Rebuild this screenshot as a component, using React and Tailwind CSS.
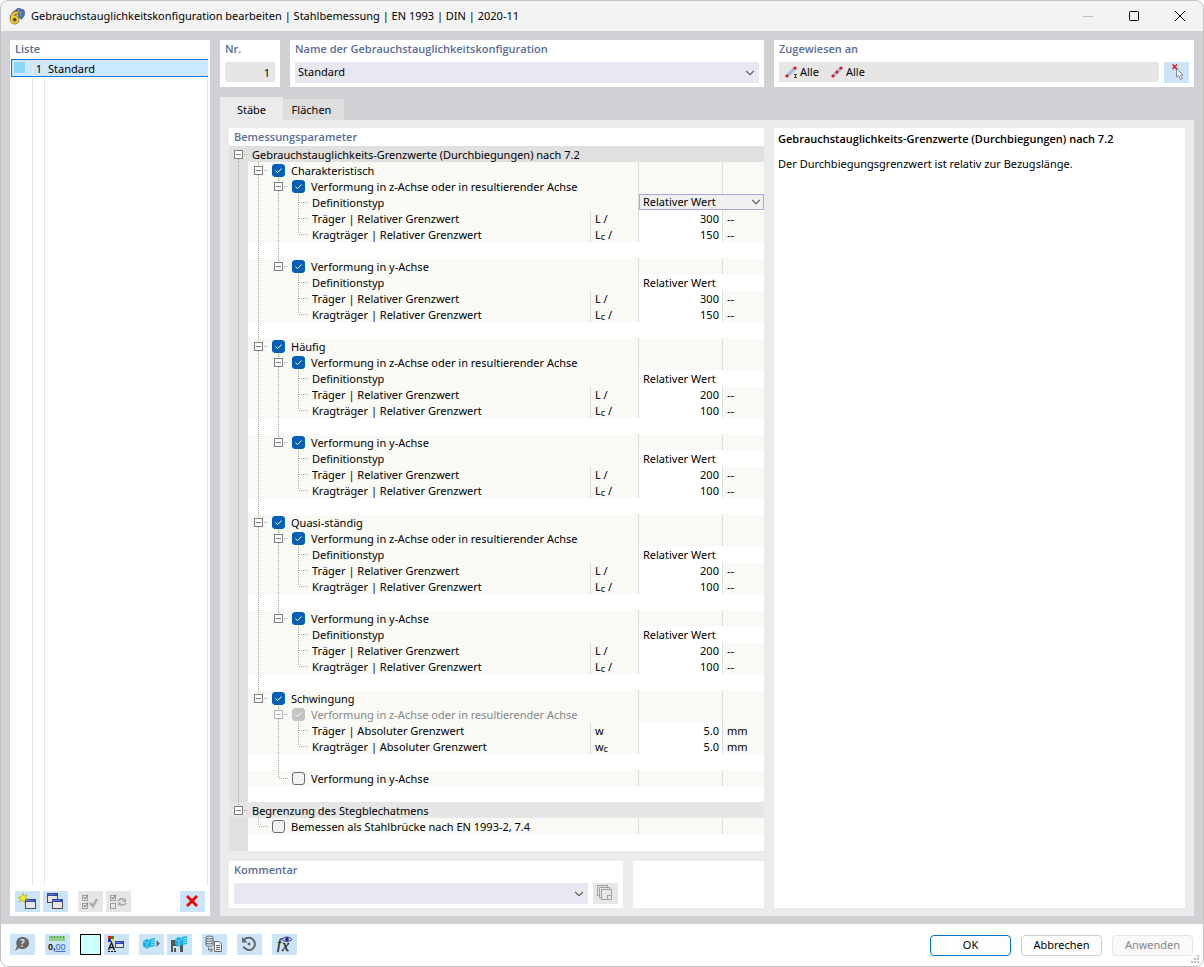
import { useState } from 'react';
import { ChevronDown } from 'lucide-react';

// Guide codes: '|' line, '+' tee, 'L' last branch, ' ' empty,
// 'm' box with line above and below, 'e' box with line above only, 'f' box with line below only
const Z_AXIS = 'Verformung in z-Achse oder in resultierender Achse';
const Y_AXIS = 'Verformung in y-Achse';

const limitRows = (outer, mid, beam, cantilever, dropdown) => [
    { guides: [outer, mid, '+'], label: 'Definitionstyp', choice: 'Relativer Wert', dropdown },
    { guides: [outer, mid, '+'], label: 'Träger | Relativer Grenzwert', symbol: 'L /', value: beam, unit: '--' },
    { guides: [outer, mid, 'L'], label: 'Kragträger | Relativer Grenzwert', symbol: 'L', sub: 'c', tail: ' /', value: cantilever, unit: '--' },
];

const group = (label, beam, cantilever, dropdown) => [
    { guides: ['m'], label, check: true },
    { guides: ['|', 'm'], label: Z_AXIS, check: true },
    ...limitRows('|', '|', beam, cantilever, dropdown),
    { blank: true, guides: ['|', '|'] },
    { guides: ['|', 'e'], label: Y_AXIS, check: true },
    ...limitRows('|', ' ', beam, cantilever),
    { blank: true, guides: ['|'] },
];

const rows = [
    { header: 'Gebrauchstauglichkeits-Grenzwerte (Durchbiegungen) nach 7.2', gutter: 'f', tone: 'bg-[#e0e0e0]' },
    ...group('Charakteristisch', '300', '150', true),
    ...group('Häufig', '200', '100'),
    ...group('Quasi-ständig', '200', '100'),
    { guides: ['e'], label: 'Schwingung', check: true },
    { guides: [' ', 'm'], label: Z_AXIS, check: true, disabled: true },
    { guides: [' ', '|', '+'], label: 'Träger | Absoluter Grenzwert', symbol: 'w', value: '5.0', unit: 'mm' },
    { guides: [' ', '|', 'L'], label: 'Kragträger | Absoluter Grenzwert', symbol: 'w', sub: 'c', value: '5.0', unit: 'mm' },
    { blank: true, guides: [' ', '|'] },
    { guides: [' ', 'L'], label: Y_AXIS, check: false },
    { blank: true, guides: [] },
    { header: 'Begrenzung des Stegblechatmens', gutter: 'e', tone: 'bg-[#e6e6e6]' },
    { guides: ['L'], label: 'Bemessen als Stahlbrücke nach EN 1993-2, 7.4', check: false, gutter: ' ' },
];

function Guide({ code, muted }) {
    const box = 'mef'.includes(code);
    const up = '|+Lme'.includes(code);
    const down = '|+mf'.includes(code);
    const right = '+Lmef'.includes(code);
    const edge = muted ? '#b4b4b4' : '#808080';

    return (
        <svg width="20" height="16" viewBox="0 0 20 16" className="block shrink-0" aria-hidden="true">
            <g stroke="#a6a6a6" strokeDasharray="1 1" fill="none">
                {up && <path d={box ? 'M10.5 0V4' : 'M10.5 0V8'} />}
                {down && <path d={box ? 'M10.5 13V16' : 'M10.5 8V16'} />}
                {right && <path d={box ? 'M16 8.5H21' : 'M11 8.5H21'} />}
            </g>
            {box && (
                <g fill="none" stroke={edge}>
                    <rect x="6.5" y="4.5" width="8" height="8" fill="#fff" />
                    <path d="M8 8.5H13" />
                </g>
            )}
        </svg>
    );
}

function Checkbox({ id, initial, disabled }) {
    const [checked, setChecked] = useState(initial);

    return (
        <span className="grid size-[13px] shrink-0">
            <input
                id={id}
                type="checkbox"
                checked={checked}
                disabled={disabled}
                onChange={(e) => setChecked(e.target.checked)}
                className="col-start-1 row-start-1 size-[13px] appearance-none rounded-[3px] border border-[#6a6a6a] bg-[#f3f3f3] checked:border-[#005fb8] checked:bg-[#005fb8] disabled:border-[#c4c4c4] disabled:bg-[#c4c4c4]"
            />
            {checked && (
                <svg viewBox="0 0 13 13" className="pointer-events-none col-start-1 row-start-1 size-[13px]" aria-hidden="true">
                    <path d="M3.5 6.5L5.5 8.7L9.5 4.5" fill="none" stroke="#fff" />
                </svg>
            )}
        </span>
    );
}

function TreeRow({ row, index }) {
    const id = `param-${index}`;

    if (row.header) {
        return (
            <tr className={`h-4 ${row.tone}`}>
                <td className="p-0" colSpan={5}>
                    <div className="flex h-4">
                        <div className="flex w-[19px] justify-end overflow-hidden">
                            <Guide code={row.gutter} />
                        </div>
                        <span className="pt-px pl-1">{row.header}</span>
                    </div>
                </td>
            </tr>
        );
    }

    const line = 'border-l border-[#dcdcdc]';
    const tint = row.blank ? '' : 'bg-[#f9faf5]';
    const isCheck = row.check !== undefined;

    return (
        <tr className={`h-4 ${tint}`}>
            <td className="bg-[#e0e0e0] p-0">
                <div className="flex h-4 w-[19px] justify-end overflow-hidden">
                    <Guide code={row.gutter ?? '|'} />
                </div>
            </td>
            <td className="p-0" colSpan={row.symbol ? 1 : 2}>
                <div className="flex h-4 whitespace-nowrap">
                    {row.guides.map((code, i) => (
                        <Guide key={i} code={code} muted={row.disabled} />
                    ))}
                    {isCheck && (
                        <span className="flex gap-1.5 pl-1">
                            <span className="pt-[2px]">
                                <Checkbox id={id} initial={row.check} disabled={row.disabled} />
                            </span>
                            <label htmlFor={id} className={row.disabled ? 'pt-px text-[#868686]' : 'pt-px'}>
                                {row.label}
                            </label>
                        </span>
                    )}
                    {!isCheck && <span className="pt-px pl-1">{row.label}</span>}
                </div>
            </td>
            {row.symbol && (
                <td className={`p-0 ${line}`}>
                    <div className="h-4 pt-px pl-1">
                        {row.symbol}
                        {row.sub && <sub className="bottom-[-1px] text-[9px]">{row.sub}</sub>}
                        {row.tail}
                    </div>
                </td>
            )}
            {row.blank && <td className="p-0" colSpan={2} />}
            {row.choice && (
                <td className={`bg-white p-0 ${line}`} colSpan={2}>
                    {row.dropdown ? (
                        <div className="grid h-4">
                            <select
                                aria-label={row.label}
                                className="col-start-1 row-start-1 h-4 w-full appearance-none border border-[#a9a5ea] bg-[#f0f0f0] pl-[3px] leading-[14px]"
                            >
                                <option>Relativer Wert</option>
                                <option>Absoluter Wert</option>
                            </select>
                            <ChevronDown
                                size={14}
                                strokeWidth={2}
                                className="pointer-events-none col-start-1 row-start-1 mr-px self-center justify-self-end text-[#666]"
                            />
                        </div>
                    ) : (
                        <div className="h-4 pt-px pl-1">{row.choice}</div>
                    )}
                </td>
            )}
            {!row.blank && !row.choice && (
                <>
                    <td className={`p-0 ${line} ${row.value ? 'bg-white' : ''}`}>
                        <div className="h-4 pt-px pr-[3px] text-right">{row.value}</div>
                    </td>
                    <td className={`p-0 ${line}`}>
                        <div className="h-4 pt-px pl-1">{row.unit}</div>
                    </td>
                </>
            )}
        </tr>
    );
}

function Caption({ children, htmlFor }) {
    const style = "block font-['Open_Sans',sans-serif] leading-[18px] font-semibold text-[#5a6c98]";
    return htmlFor ? (
        <label htmlFor={htmlFor} className={style}>
            {children}
        </label>
    ) : (
        <h2 className={style}>{children}</h2>
    );
}

function ToolButton({ label, disabled, children }) {
    return (
        <button
            type="button"
            aria-label={label}
            disabled={disabled}
            className="grid h-[21px] w-[25px] shrink-0 place-items-center bg-[#cce4f7] disabled:bg-[#e6e6e6]"
        >
            <svg width="21" height="17" viewBox="0 0 21 17" className="overflow-visible" aria-hidden="true">
                {children}
            </svg>
        </button>
    );
}

function MiniWindow({ x, y, w = 10, h = 9 }) {
    return (
        <g>
            <rect x={x + 0.5} y={y + 0.5} width={w} height={h} fill="#e6e6e6" stroke="#4d4d4d" />
            <rect x={x} y={y} width={w + 1} height="3" fill="#33479f" />
            <path d={`M${x + 1} ${y + 1.5}H${x + w - 2}`} stroke="#5b7cf0" />
        </g>
    );
}

function CheckPair({ second }) {
    return (
        <g fill="none" stroke="#a0a0a0">
            <rect x="2.5" y="2.5" width="5" height="5" />
            <rect x="2.5" y="10.5" width="5" height="5" />
            <path d="M3.5 4L5 6L8 1.5" stroke="#777" />
            {second && <path d="M3.5 12L5 14L8 9.5" stroke="#777" />}
        </g>
    );
}

function Cube({ x = 0, y = 0 }) {
    return (
        <g transform={`translate(${x} ${y})`}>
            <path d="M0 4L4 2L8 4V9L4 12L0 9Z" fill="#14b1e7" />
            <path d="M0 4L4 6L8 4M4 6V12" stroke="#8adcf8" fill="none" strokeWidth=".8" />
            <path d="M7 2L12 1V9L7 10Z" fill="#14b1e7" />
            <path d="M8 4L12 3M8 6L12 5M8 8L12 7" stroke="#c7effc" strokeWidth=".8" />
        </g>
    );
}

function MemberIcon({ kind }) {
    return (
        <svg width="14" height="13" viewBox="0 0 14 13" aria-hidden="true">
            <path d="M2 10L10 2" stroke="#a8bdd8" strokeWidth="3.5" />
            <circle cx="10" cy="2" r="1.6" fill="#e3131b" />
            <circle cx="2" cy="10" r="1.6" fill="#e3131b" />
            {kind === 'set' ? (
                <circle cx="6" cy="6" r="1.6" fill="#e3131b" />
            ) : (
                <path d="M9 8.5H12M10.5 8.5V11.5M9 11.5H12" stroke="#444" fill="none" />
            )}
        </svg>
    );
}

function TitleBar() {
    return (
        <header className="flex h-[30px] shrink-0 items-center bg-[#f3f3f3] pr-[17px] pl-2">
            <svg width="16" height="17" viewBox="0 0 16 17" aria-hidden="true">
                <path d="M4 4L9 0L15 2L16 6L13 11L10 10L9 6L4 6Z" fill="#4a70ad" stroke="#54627c" strokeWidth=".7" />
                <path d="M6 3L13 5M9 1L12 8" stroke="#8fb0dc" strokeWidth=".6" fill="none" />
                <path d="M8.5 4.500C4 5 2.500 8 2.500 11" fill="none" stroke="#6e6035" strokeWidth="3.600" strokeLinecap="round" />
                <circle cx="5.700" cy="11.700" r="3" fill="#fff" stroke="#6e6035" strokeWidth="3.400" />
                <path d="M8.5 4.500C4 5 2.500 8 2.700 11" fill="none" stroke="#f6cb2e" strokeWidth="2.200" strokeLinecap="round" />
                <circle cx="5.700" cy="11.700" r="3" fill="#4a4f5c" stroke="#f6cb2e" strokeWidth="2.200" />
            </svg>
            <h1 className="flex-1 pl-[6px]">
                Gebrauchstauglichkeitskonfiguration bearbeiten | Stahlbemessung | EN 1993 | DIN | 2020-11
            </h1>
            <div className="flex items-center gap-[34px]">
                <button type="button" aria-label="Minimieren" disabled>
                    <svg width="12" height="12" viewBox="0 0 12 12">
                        <path d="M1 6.500H11" stroke="#bdbdbd" />
                    </svg>
                </button>
                <button type="button" aria-label="Maximieren">
                    <svg width="12" height="12" viewBox="0 0 12 12">
                        <rect x="1.5" y="1.5" width="9" height="9" rx="1" fill="none" stroke="#000" />
                    </svg>
                </button>
                <button type="button" aria-label="Schließen">
                    <svg width="12" height="12" viewBox="0 0 12 12">
                        <path d="M1 1L11 11M11 1L1 11" stroke="#000" />
                    </svg>
                </button>
            </div>
        </header>
    );
}

function ListPanel() {
    return (
        <aside className="flex w-[200px] shrink-0 flex-col bg-white">
            <div className="pl-[5px]">
                <Caption>Liste</Caption>
            </div>
            <div className="flex flex-1 flex-col pt-px pr-[2px] pl-px">
                <div className="flex h-[18px] border border-r-0 border-[#0078d4] bg-[#cce8ff]">
                    <div className="flex w-[21px] border-r border-[#e6e6e6] pt-[2px] pl-[2px]">
                        <span className="size-[11px] bg-[#8fd6f6]" />
                    </div>
                    <div className="w-3 border-r border-[#e6e6e6] pt-px pr-[2px] text-right">1</div>
                    <div className="flex-1 pt-px pl-[3px]">Standard</div>
                </div>
                <div className="flex flex-1">
                    <div className="w-[22px] border-r border-[#e6e6e6]" />
                    <div className="w-3 border-r border-[#e6e6e6]" />
                    <div className="flex-1 border-r border-[#e6e6e6]" />
                </div>
            </div>
            <div className="flex h-[30px] items-start gap-[3px] px-[5px] pt-[5px]">
                <ToolButton label="Neu">
                    <MiniWindow x={8} y={6} />
                    <path d="M6 0L7 3L10 1.500L8.500 4.500L11 6L8 6.500L7.500 10L5.500 7L2.500 9L3.800 5.800L1 4.500L4.500 3.800Z" fill="#f7f01c" stroke="#a59c14" strokeWidth=".6" />
                </ToolButton>
                <ToolButton label="Kopieren">
                    <MiniWindow x={2} y={0} />
                    <MiniWindow x={7} y={6} />
                </ToolButton>
                <span className="w-[4px]" />
                <ToolButton label="Alle auswählen" disabled>
                    <CheckPair second />
                    <path d="M10 10L13 13L17 6" stroke="#aaa" strokeWidth="2.500" fill="none" />
                </ToolButton>
                <ToolButton label="Auswahl umkehren" disabled>
                    <CheckPair />
                    <path d="M10 8C12 5 15 5 17 8M18 10C16 12.500 13 12.500 11 10.500" stroke="#aaa" strokeWidth="1.800" fill="none" />
                    <path d="M18 5V9H14ZM10 13V9.500H13.500Z" fill="#aaa" />
                </ToolButton>
                <span className="flex-1" />
                <ToolButton label="Löschen">
                    <path d="M5 3L15 13M15 3L5 13" stroke="#f00000" strokeWidth="2.800" />
                </ToolButton>
            </div>
        </aside>
    );
}

function Combo({ id, label, options }) {
    return (
        <div className="grid flex-1">
            <select id={id} aria-label={label} className="col-start-1 row-start-1 h-[21px] w-full appearance-none bg-[#e8e8f3] pb-px pl-[3px]">
                {options.map((option) => (
                    <option key={option}>{option}</option>
                ))}
            </select>
            <ChevronDown
                size={14}
                strokeWidth={2}
                className="pointer-events-none col-start-1 row-start-1 mr-[2px] self-center justify-self-end text-[#666]"
            />
        </div>
    );
}

function TopPanels() {
    return (
        <div className="flex h-[47px] gap-[10px]">
            <div className="w-[60px] shrink-0 bg-white px-[5px]">
                <Caption htmlFor="config-no">Nr.</Caption>
                <input
                    id="config-no"
                    readOnly
                    defaultValue="1"
                    className="mt-1 block h-5 w-full bg-[#e6e6e6] pr-[5px] text-right"
                />
            </div>
            <div className="flex min-w-0 flex-1 flex-col bg-white px-[5px]">
                <Caption htmlFor="config-name">Name der Gebrauchstauglichkeitskonfiguration</Caption>
                <div className="flex pt-1">
                    <Combo id="config-name" options={['Standard']} />
                </div>
            </div>
            <div className="w-[420px] shrink-0 bg-white px-[5px]">
                <Caption>Zugewiesen an</Caption>
                <div className="flex gap-[5px] pt-1">
                    <div className="flex h-5 flex-1 items-center gap-3 bg-[#e6e6e6] pl-[6px]">
                        <span className="flex items-center gap-px">
                            <MemberIcon kind="member" />
                            Alle
                        </span>
                        <span className="flex items-center gap-px">
                            <MemberIcon kind="set" />
                            Alle
                        </span>
                    </div>
                    <ToolButton label="Objekte auswählen">
                        <path d="M10.500 4.500V13L12.500 11.500L14.500 15.500L16.500 14.500L14.500 11H17Z" fill="#fff" stroke="#808898" />
                        <path d="M6.500 .5L11 5M11 .5L6.500 5" stroke="#e8141c" strokeWidth="1.500" />
                    </ToolButton>
                </div>
            </div>
        </div>
    );
}

function ParameterTree() {
    return (
        <section className="flex flex-1 flex-col bg-white">
            <div className="pl-[5px]">
                <Caption>Bemessungsparameter</Caption>
            </div>
            <table className="w-full table-fixed border-separate border-spacing-0 leading-4">
                <colgroup>
                    <col className="w-[19px]" />
                    <col />
                    <col className="w-12" />
                    <col className="w-[84px]" />
                    <col className="w-[42px]" />
                </colgroup>
                <tbody>
                    {rows.map((row, i) => (
                        <TreeRow key={i} row={row} index={i} />
                    ))}
                </tbody>
            </table>
            <div className="min-h-[17px] w-[19px] flex-1 bg-[#e0e0e0]" />
        </section>
    );
}

function CommentPanels() {
    return (
        <div className="flex h-[47px] gap-[10px]">
            <div className="flex flex-1 flex-col bg-white px-[5px]">
                <Caption htmlFor="comment">Kommentar</Caption>
                <div className="flex gap-[5px] pt-1">
                    <Combo id="comment" options={['']} />
                    <ToolButton label="Kommentare übernehmen" disabled>
                        <g fill="#e6e6e6" stroke="#a0a0a0">
                            <rect x="2.5" y=".5" width="10" height="10" />
                            <rect x="4.5" y="2.5" width="10" height="10" />
                            <rect x="6.5" y="4.5" width="10" height="10" />
                            <rect x="12.5" y="10.5" width="4" height="4" />
                        </g>
                    </ToolButton>
                </div>
            </div>
            <div className="w-[131px] shrink-0 bg-white" />
        </div>
    );
}

function Tabs() {
    return (
        <div role="tablist" className="flex items-end pt-[10px]">
            <button type="button" role="tab" aria-selected="true" className="h-[23px] w-[63px] bg-[#ebebeb] pt-[2px]">
                Stäbe
            </button>
            <button type="button" role="tab" aria-selected="false" className="h-[21px] w-[61px] bg-[#dedede] pr-1">
                Flächen
            </button>
        </div>
    );
}

function Footer() {
    return (
        <footer className="flex h-[42px] shrink-0 items-center bg-white pr-[10px] pl-[9px]">
            <div className="flex items-center gap-[10px] pb-px">
                <ToolButton label="Hilfe">
                    <path d="M10 1C14.500 1 17 3.500 17 7C17 10.500 14 13 10.500 13C9 13 8 13 7 12L3 15L5 10C4 8 4 6 5 4C6 2 8 1 10 1Z" fill="#666" />
                    <text x="8" y="11" fontSize="10" fontWeight="bold" fill="#cce4f7">?</text>
                </ToolButton>
                <ToolButton label="Einheiten und Dezimalstellen">
                    <rect x="2" y="0" width="16" height="5" fill="#8ed08b" />
                    <path d="M4.500 0V2M7.500 0V2M10.500 0V2M13.500 0V2M16.500 0V2" stroke="#4f9a4c" />
                    <text x="1" y="14" fontSize="9" fontWeight="bold" fontFamily="Liberation Sans" fill="#111">0,</text>
                    <text x="8.500" y="14" fontSize="9" fontFamily="Liberation Sans" fill="#2a62e0" textDecoration="underline">00</text>
                </ToolButton>
                <div className="flex gap-[3px]">
                    <button type="button" aria-label="Farbe" className="h-[21px] w-[21px] border border-black bg-[#ccffff]" />
                    <ToolButton label="Anzeige">
                        <rect x="2" y="0" width="3" height="3" fill="#e3131b" />
                        <rect x="5" y="0" width="3" height="3" fill="#12a012" />
                        <rect x="2" y="3" width="3" height="3" fill="#2036e0" />
                        <rect x="5" y="3" width="3" height="3" fill="#f5e400" />
                        <path d="M2.500 14L5.500 6.500L8.500 14M3.500 11.500H7.500" stroke="#111" strokeWidth="1.300" fill="none" />
                        <path d="M2 15.500H10" stroke="#111" strokeDasharray="2 1" />
                        <MiniWindow x={9} y={5} w={8} h={6} />
                    </ToolButton>
                </div>
                <div className="flex gap-[3px]">
                    <ToolButton label="Importieren">
                        <Cube x={2} y={1} />
                        <path d="M15.500 4L19 7.500L15.500 11Z" fill="#666" />
                    </ToolButton>
                    <ToolButton label="Speichern">
                        <path d="M2 4H12L14 6V16H2Z" fill="#555" />
                        <rect x="4" y="10" width="7" height="6" fill="#cce4f7" />
                        <rect x="5" y="12" width="2" height="4" fill="#555" />
                        <Cube x={6} y={-1} />
                    </ToolButton>
                </div>
                <ToolButton label="Datenbank">
                    <g fill="none" stroke="#666">
                        <ellipse cx="5.5" cy="1.5" rx="3.500" ry="1.500" />
                        <path d="M2 1.500V9C2 10.800 9 10.800 9 9V1.500M2 4C2 5.800 9 5.800 9 4M2 6.500C2 8.300 9 8.300 9 6.500" />
                        <path d="M4.500 11.500V14H8M6.500 12L8.500 14L6.500 16" />
                        <path d="M10.500 5.500H15L17.500 8V15.500H10.500Z" fill="#f4f4f4" />
                        <path d="M12 9.500H16M12 11.500H16M12 13.500H16" />
                    </g>
                </ToolButton>
                <ToolButton label="Zurücksetzen">
                    <path d="M5 4C7 1.500 11 1 13.500 3C17 6 16.500 10.500 13.500 13C10.500 15 6 14 4.500 10.500" fill="none" stroke="#666" strokeWidth="2" />
                    <path d="M3 1V6.500H8.500Z" fill="#666" />
                    <circle cx="10" cy="8" r="1.500" fill="#666" />
                </ToolButton>
                <ToolButton label="Formel">
                    <text x="3" y="13" fontSize="15" fontStyle="italic" fontFamily="Liberation Serif" fill="#222" stroke="#222" strokeWidth=".3">f</text>
                    <text x="8" y="15" fontSize="16" fontStyle="italic" fontFamily="Liberation Serif" fill="#222" stroke="#222" strokeWidth=".3">x</text>
                    <path d="M8 3.500C10.500 .3 15.500 .3 18 3.500C15.500 6 10.500 6 8 3.500Z" fill="#dfe6fa" stroke="#2b2b7c" />
                    <circle cx="13" cy="3.200" r="1.900" fill="#2b2b7c" />
                </ToolButton>
            </div>
            <div className="ml-auto flex gap-[10px]">
                <button type="button" className="h-[21px] w-[81px] rounded-[4px] border border-[#0078d4] bg-[#fdfdfd]">
                    OK
                </button>
                <button type="button" className="h-[21px] w-[81px] rounded-[4px] border border-[#d0d0d0] bg-[#fdfdfd]">
                    Abbrechen
                </button>
                <button type="button" disabled className="h-[21px] w-[81px] rounded-[4px] border border-[#e5e5e5] bg-[#f9f9f9] text-[#868686]">
                    Anwenden
                </button>
            </div>
            {/* resize grip */}
            <svg width="8" height="8" viewBox="0 0 8 8" className="absolute right-1 bottom-[3px]" aria-hidden="true">
                <path d="M6 0H8V2H6ZM3 3H5V5H3ZM6 3H8V5H6ZM0 6H2V8H0ZM3 6H5V8H3ZM6 6H8V8H6Z" fill="#bdbdbd" />
            </svg>
        </footer>
    );
}

export default function App() {
    return (
        <div className="relative flex min-h-screen flex-col overflow-hidden rounded-lg border border-[#c3c3c3] bg-[#d0d0d5] font-['Noto_Sans',sans-serif] text-[11px] leading-4 text-black">
            <TitleBar />
            <main className="flex flex-1 gap-[10px] px-[9px] pt-[9px] pb-2">
                <ListPanel />
                <div className="flex min-w-0 flex-1 flex-col">
                    <TopPanels />
                    <Tabs />
                    <div className="flex flex-1 gap-[10px] bg-[#ebebeb] px-[9px] pt-2 pb-2">
                        <div className="flex min-w-0 flex-1 flex-col gap-[10px]">
                            <ParameterTree />
                            <CommentPanels />
                        </div>
                        <article className="w-[411px] shrink-0 bg-white px-1 pt-[3px]">
                            <h2 className="font-['Open_Sans',sans-serif] font-semibold">
                                Gebrauchstauglichkeits-Grenzwerte (Durchbiegungen) nach 7.2
                            </h2>
                            <p className="pt-[9px]">Der Durchbiegungsgrenzwert ist relativ zur Bezugslänge.</p>
                        </article>
                    </div>
                </div>
            </main>
            <Footer />
        </div>
    );
}
